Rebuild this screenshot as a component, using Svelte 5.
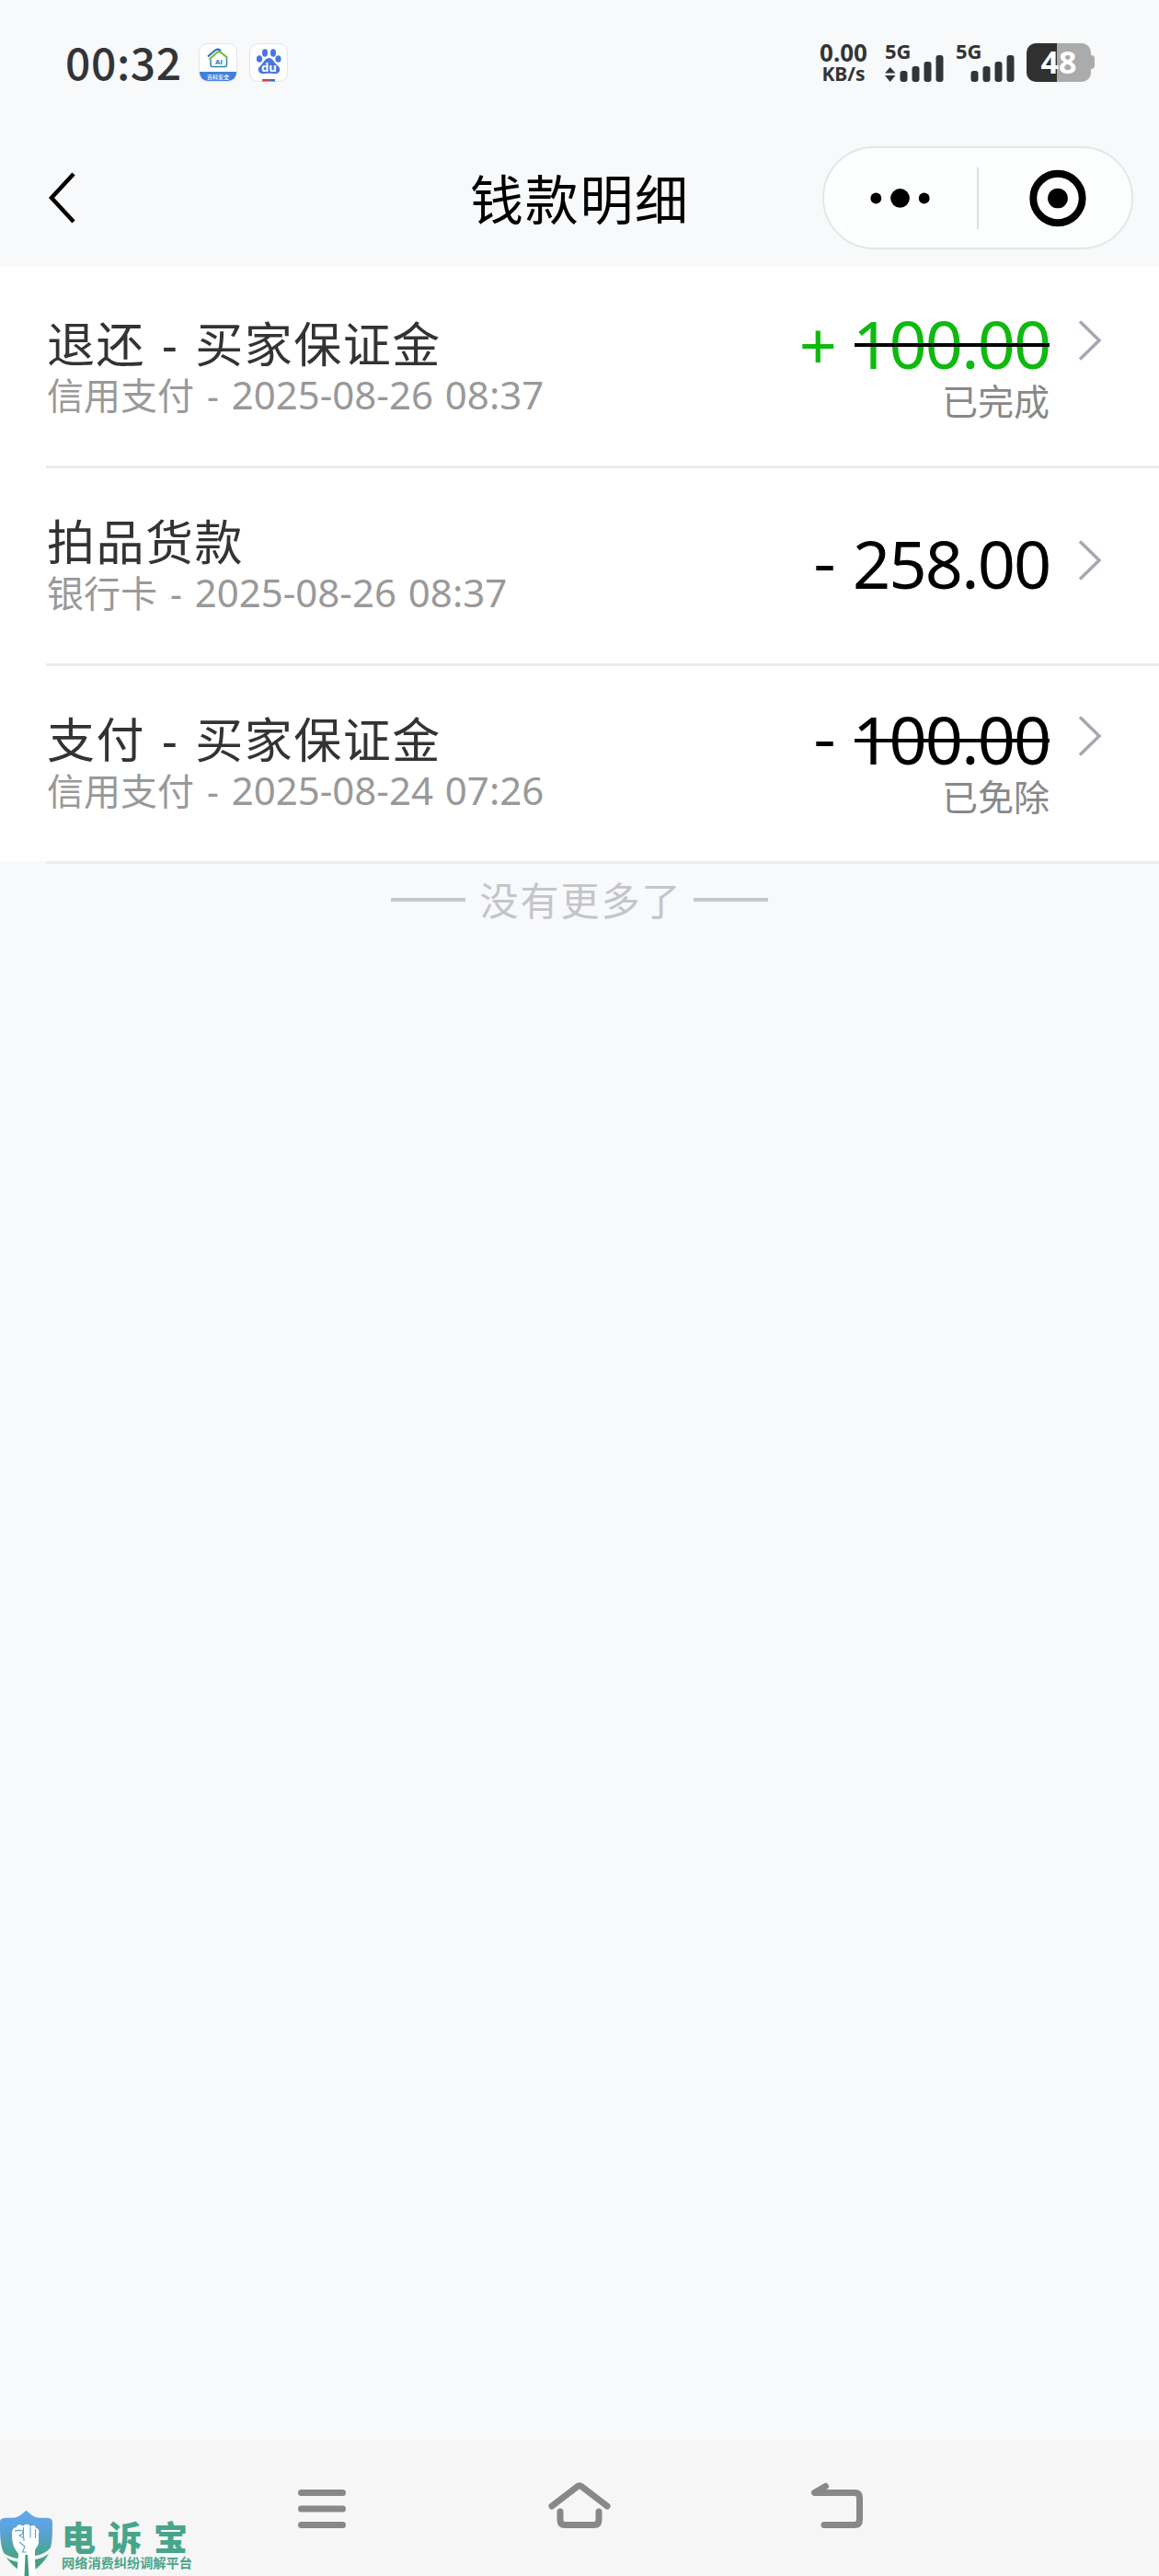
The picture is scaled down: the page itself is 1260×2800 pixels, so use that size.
<script>
	let time = '00:32';
	let records = [
		{
			title: '退还 - 买家保证金',
			method: '信用支付',
			date: '2025-08-26 08:37',
			sign: '+',
			amount: '100.00',
			state: '已完成',
			income: true
		},
		{
			title: '拍品货款',
			method: '银行卡',
			date: '2025-08-26 08:37',
			sign: '-',
			amount: '258.00',
			state: '',
			income: false
		},
		{
			title: '支付 - 买家保证金',
			method: '信用支付',
			date: '2025-08-24 07:26',
			sign: '-',
			amount: '100.00',
			state: '已免除',
			income: false
		}
	];
</script>

<div class="screen">
	<div class="statusbar">
		<span class="time">{time}</span>
		<svg class="app" width="42" height="42" viewBox="0 0 42 42">
			<defs>
				<clipPath id="tile"><rect x="1" y="1" width="40" height="40" rx="9" /></clipPath>
			</defs>
			<rect x=".5" y=".5" width="41" height="41" rx="9" fill="#fff" stroke="#e3e5e8" />
			<rect x="0" y="31" width="42" height="11" fill="#4080dc" clip-path="url(#tile)" />
			<path d="M13 17.500v6q0 2 2 2h13.500q2 0 2-2v-9" fill="none" stroke="#2f86a8" stroke-width="1.500" />
			<path d="M10 14.500 17.500 8q3-2.500 5.500-.5l1 1" fill="none" stroke="#2472b8" stroke-width="2" />
			<path d="M11.500 17.500 20 10q2-1.500 4 0l7 5.500" fill="none" stroke="#76b82a" stroke-width="2" />
			<text x="21.700" y="23.300" class="ai">AI</text>
			<text x="21" y="38.800" class="appname">百科安全</text>
		</svg>
		<svg class="app" width="42" height="42" viewBox="0 0 42 42">
			<rect x=".5" y=".5" width="41" height="41" rx="9" fill="#fff" stroke="#e3e5e8" />
			<g fill="#4876e0">
				<ellipse cx="17" cy="10.500" rx="3" ry="4.200" />
				<ellipse cx="26" cy="10.500" rx="3" ry="4.200" />
				<ellipse cx="11" cy="17" rx="3.100" ry="3.800" />
				<ellipse cx="31.500" cy="17" rx="3.100" ry="3.800" />
				<path d="M21.500 16c4 0 5 4 8 7s4.500 4 3.500 7-4 3.500-7 3-6-.5-9 0-6 0-7-3 1-4 3.500-7 4-7 8-7z" />
			</g>
			<text x="21.500" y="30.500" class="du">du</text>
			<path d="M14 39h8v2.500h-8z" fill="#c8484c" />
			<path d="M22 39h6v2.500h-6z" fill="#3c6bd8" />
		</svg>
		<div class="speed">
			<b>0.00</b>
			<small>KB/s</small>
		</div>
		<svg class="signal first" width="65" height="44" viewBox="0 0 65 44" fill="#333436">
			<text x="0" y="18" class="net">5G</text>
			<path d="M0 33.500 5.700 27l5.800 6.500zM0 36l5.700 7 5.800-7z" />
			<rect x="16.500" y="31" width="8" height="12" rx="3" />
			<rect x="29.500" y="26" width="8" height="17" rx="3" />
			<rect x="42.500" y="21" width="8" height="22" rx="3" />
			<rect x="55.500" y="14" width="8" height="29" rx="3" />
		</svg>
		<svg class="signal" width="65" height="44" viewBox="0 0 65 44" fill="#333436">
			<text x="0" y="18" class="net">5G</text>
			<rect x="16.500" y="31" width="8" height="12" rx="3" />
			<rect x="29.500" y="26" width="8" height="17" rx="3" />
			<rect x="42.500" y="21" width="8" height="22" rx="3" />
			<rect x="55.500" y="14" width="8" height="29" rx="3" />
		</svg>
		<svg class="battery" width="74" height="42" viewBox="0 0 74 42">
			<path d="M33 0h27a10 10 0 0 1 10 10v3q4 0 4 4v7q0 4-4 4v4a10 10 0 0 1-10 10H33z" fill="#ababac" />
			<path d="M33 0H10A10 10 0 0 0 0 10v22a10 10 0 0 0 10 10h23z" fill="#303031" />
			<text x="35" y="33" class="level">48</text>
		</svg>
	</div>

	<header>
		<svg class="back" width="32" height="60" viewBox="0 0 32 60">
			<path d="M30 4 6 30l24 26" />
		</svg>
		<h1>钱款明细</h1>
		<div class="capsule">
			<svg width="168" height="66" viewBox="0 0 168 66">
				<circle cx="57" cy="33.500" r="6" />
				<circle cx="83.500" cy="33.500" r="10.500" />
				<circle cx="110" cy="33.500" r="6" />
			</svg>
			<i></i>
			<svg width="168" height="66" viewBox="0 0 168 66">
				<circle cx="87" cy="33.500" r="27" fill="none" stroke="#000" stroke-width="8" />
				<circle cx="87" cy="33.500" r="11" />
			</svg>
		</div>
	</header>

	<main>
		<div class="list">
			{#each records as record, i}
				{#if i > 0}
					<div class="line"></div>
				{/if}
				<div class="record">
					<div class="info">
						<div class="title">{record.title}</div>
						<div class="desc">{record.method} - <span>{record.date}</span></div>
					</div>
					<div class="money" class:single={!record.state}>
						<div class="amount" class:income={record.income}>
							<span class="sign" class:minus={record.sign === '-'}>{record.sign}</span>
							<span class="value" class:deleted={record.state}>{record.amount}</span>
							<svg width="26" height="44" viewBox="0 0 26 44">
								<path d="M2 1.500 23 22 2 42.500" />
							</svg>
						</div>
						{#if record.state}
							<div class="state">{record.state}</div>
						{/if}
					</div>
				</div>
			{/each}
		</div>
		<div class="line"></div>
		<div class="nomore">
			<i></i>
			<span>没有更多了</span>
			<i></i>
		</div>
	</main>

	<nav>
		<svg width="70" height="60" viewBox="0 0 70 60">
			<path d="M12.500 12.500h45M12.500 30h45M12.500 47.500h45" />
		</svg>
		<svg width="70" height="60" viewBox="0 0 70 60">
			<path d="M5 27 33 5.500q2-1.500 4 0L65 27M14 33v9q0 5.500 5 5.500h32q5 0 5-5.500v-9" />
		</svg>
		<svg width="70" height="60" viewBox="0 0 70 60">
			<path d="M22.500 5.500 10.500 12.500H54q5.500 0 5.500 5.500v24q0 5.500-5.500 5.500H21" />
		</svg>
		<div class="brand">
			<svg width="58" height="72" viewBox="0 0 58 72">
				<defs>
					<linearGradient id="shield" x1="0" y1="0" x2="0" y2="1">
						<stop offset="0" stop-color="#62a8f0" />
						<stop offset=".35" stop-color="#5aa2d8" />
						<stop offset=".75" stop-color="#48a58c" />
						<stop offset="1" stop-color="#3f9c7c" />
					</linearGradient>
				</defs>
				<path
					d="M28.500 0c3 1 5 6 12 7.500 5 1 10-.5 14 1 3 1 2.500 4 2.500 8 0 26-3 34-18 47H19C3 50 0 42 0 16.500c0-4-.5-7 2.500-8 4-1.500 9 0 14-1 7-1.500 9-6.500 12-7.500z"
					fill="url(#shield)"
				/>
				<path d="M0 42c5 6 11 8.500 20 10v4C12 54 7 52 4 48zM55 40c-4 5-10 8-17 9v4c8-1 15-5 18-10z" fill="#f6f6f6" />
				<path
					d="M13 24c0-3 2-6 5-6 0-3 5-4 7-1 2-3 6-3 8 0 3-2 6-1 6 2 3 0 4 2 3 7v9c0 3-3 5-4 8v10l1 20H18l2-26-4-6c-2-4-3-8-3-17z"
					fill="#fff"
				/>
				<path
					d="M16 22c3-1 9-1 9 1s-1 3-4 4l5 3v3M25.500 18v11M33 17.500v12M38.500 20v10M21 34l6 5-2.500 6h4"
					fill="none"
					stroke="#57a6c0"
					stroke-width="1.100"
				/>
				<path d="M27.500 48h2.500l1.500 24h-5z" fill="#3f9c7c" />
			</svg>
			<div class="words">
				<strong>电诉宝</strong>
				<span>网络消费纠纷调解平台</span>
			</div>
		</div>
	</nav>
</div>

<style>
	:global(body) {
		margin: 0;
		background: #f7f9fb;
	}
	.screen {
		display: flex;
		flex-direction: column;
		width: 1260px;
		height: 2800px;
		overflow: hidden;
		background: #f7f9fb;
		font-family: 'Noto Sans', 'Noto Sans CJK SC', sans-serif;
	}
	svg {
		display: block;
		flex: none;
		overflow: visible;
	}

	.statusbar {
		display: flex;
		align-items: center;
		box-sizing: border-box;
		height: 136px;
		padding-left: 71px;
		color: #333436;
	}
	.time {
		width: 145px;
		margin-top: -5px;
		font: 500 48px/60px 'Noto Sans CJK SC', sans-serif;
		letter-spacing: 0.6px;
	}
	.app + .app {
		margin-left: 13px;
	}
	.ai {
		font: 700 8px 'Liberation Sans', sans-serif;
		fill: #2472b8;
		text-anchor: middle;
	}
	.appname {
		font: 500 6px 'Noto Sans CJK SC', sans-serif;
		fill: #fff;
		text-anchor: middle;
	}
	.du {
		font: 700 13px 'Open Sans', sans-serif;
		fill: #fff;
		text-anchor: middle;
	}
	.speed {
		display: flex;
		flex-direction: column;
		align-items: center;
		width: 54px;
		margin-left: 577px;
		white-space: nowrap;
	}
	.speed b {
		font: 700 26px/24px 'Noto Sans', sans-serif;
	}
	.speed small {
		font: 700 21px/23px 'Noto Sans', sans-serif;
	}
	.signal {
		margin-left: 12px;
	}
	.signal.first {
		margin-left: 18px;
	}
	.net {
		font: 700 22px 'Noto Sans', sans-serif;
	}
	.battery {
		margin-left: 12px;
	}
	.level {
		font: 700 34px 'Noto Sans', sans-serif;
		fill: #fff;
		text-anchor: middle;
	}

	header {
		display: flex;
		align-items: center;
		height: 154px;
		padding: 0 28px 0 50px;
	}
	header .back {
		margin-top: 4px;
	}
	.back path {
		fill: none;
		stroke: #000;
		stroke-width: 4.5;
	}
	h1 {
		flex: 1;
		margin: 8px 0 0 429px;
		font-size: 58px;
		font-weight: 400;
		line-height: 70px;
		letter-spacing: 1.7px;
		color: #000;
	}
	.capsule {
		display: flex;
		align-items: center;
		box-sizing: border-box;
		width: 338px;
		height: 112px;
		margin-top: 4px;
		border: 2px solid #e5e6e7;
		border-radius: 56px;
		background: #fdfefe;
	}
	.capsule i {
		width: 2px;
		height: 67px;
		background: #dcdddd;
	}
	.capsule svg {
		width: 166px;
	}

	main {
		flex: 1;
	}
	.list {
		padding-top: 4px;
		background: #fff;
	}
	.line {
		height: 3px;
		margin-left: 50px;
		background: #ececed;
	}
	.record {
		display: flex;
		justify-content: space-between;
		box-sizing: border-box;
		height: 212px;
		padding: 50px 62px 0 51px;
	}
	.title {
		font-size: 52px;
		line-height: 60px;
		letter-spacing: 1.5px;
		word-spacing: 3px;
		color: #333;
	}
	.desc {
		font-size: 40px;
		line-height: 50px;
		word-spacing: 3.5px;
		color: #999;
	}
	.desc span {
		font-size: 42px;
		word-spacing: 2px;
	}
	.money.single {
		padding-top: 24px;
	}
	.amount {
		display: flex;
		align-items: center;
		justify-content: flex-end;
		height: 60px;
		color: #000;
	}
	.amount.income {
		color: #0fb90f;
	}
	.sign {
		margin-right: 19px;
		font-size: 72px;
		line-height: 60px;
	}
	/* the CJK face has the wider, higher hyphen */
	.minus {
		margin: -13px 20px 0 0;
		font-family: 'Noto Sans CJK SC', sans-serif;
	}
	.value {
		position: relative;
		width: 212px;
		margin-top: -2px;
		font-size: 72px;
		line-height: 60px;
		letter-spacing: -1.8px;
		white-space: nowrap;
		text-indent: -2px;
	}
	/* strike bar stays black whatever the amount colour is */
	.deleted::after {
		content: '';
		position: absolute;
		left: 0;
		right: 0;
		top: 30px;
		height: 4px;
		background: #000;
	}
	.amount svg {
		margin: -8px 0 0 31px;
	}
	.amount path {
		fill: none;
		stroke: #a6a7b4;
		stroke-width: 3.5;
	}
	.state {
		margin: 8px 57px 0 0;
		font-size: 39px;
		line-height: 48px;
		text-align: right;
		color: #888;
	}

	.nomore {
		display: flex;
		align-items: center;
		justify-content: center;
		height: 78px;
		font-size: 42px;
		letter-spacing: 2px;
		color: #c4c5c7;
	}
	.nomore span {
		margin: -4px 12px 0 15px;
	}
	.nomore i {
		width: 81px;
		height: 4px;
		background: #c6c7c9;
	}

	nav {
		position: relative;
		display: flex;
		justify-content: center;
		gap: 210px;
		box-sizing: border-box;
		height: 147px;
		padding-top: 44px;
		background: #f6f6f6;
	}
	nav > svg path {
		fill: none;
		stroke: #888;
		stroke-width: 7;
		stroke-linecap: round;
		stroke-linejoin: round;
	}
	/* platform mark lies over the navigation bar */
	.brand {
		position: absolute;
		left: 0;
		bottom: -1px;
		display: flex;
		align-items: flex-end;
		color: #48a58c;
	}
	.words {
		display: flex;
		flex-direction: column;
		margin: 0 0 7px 9px;
		font-family: 'Noto Sans CJK SC', sans-serif;
		white-space: nowrap;
	}
	.words strong {
		font-size: 37px;
		font-weight: 900;
		line-height: 38px;
		letter-spacing: 13px;
	}
	.words span {
		font-size: 14.2px;
		font-weight: 700;
		line-height: 18px;
	}
</style>
